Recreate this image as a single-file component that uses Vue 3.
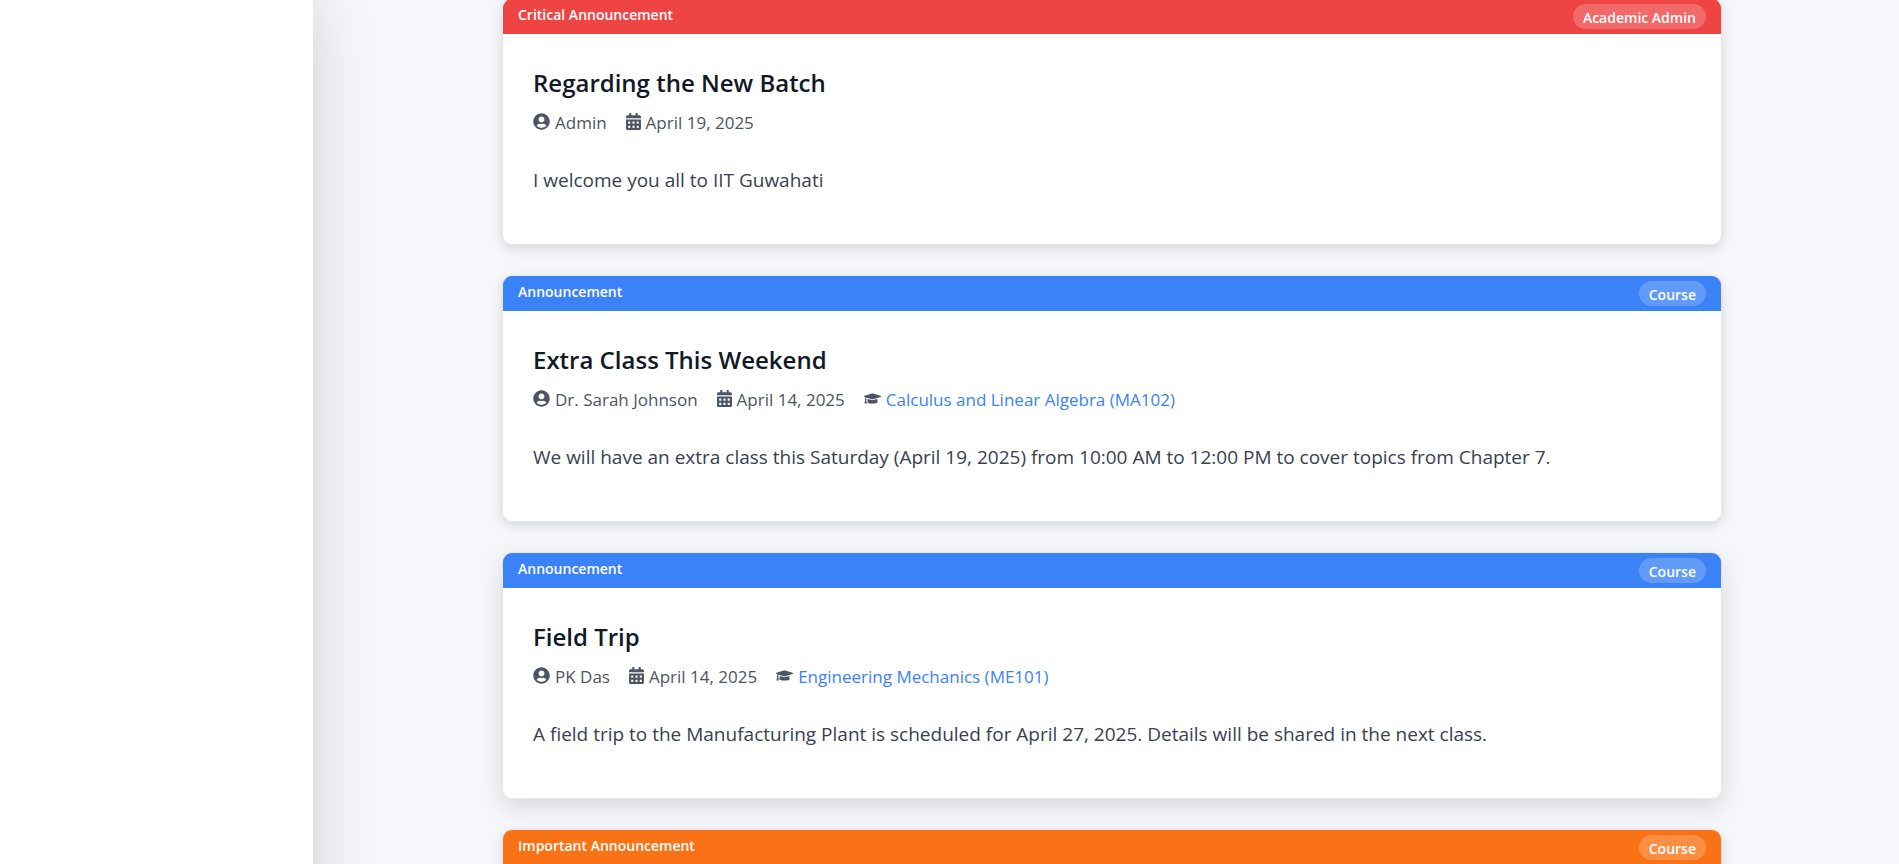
<script setup>
const announcements = [
  {
    id: 1,
    level: 'critical',
    label: 'Critical Announcement',
    source: 'Academic Admin',
    title: 'Regarding the New Batch',
    author: 'Admin',
    date: 'April 19, 2025',
    body: 'I welcome you all to IIT Guwahati',
  },
  {
    id: 2,
    level: 'normal',
    label: 'Announcement',
    source: 'Course',
    title: 'Extra Class This Weekend',
    author: 'Dr. Sarah Johnson',
    date: 'April 14, 2025',
    course: 'Calculus and Linear Algebra (MA102)',
    body: 'We will have an extra class this Saturday (April 19, 2025) from 10:00 AM to 12:00 PM to cover topics from Chapter 7.',
  },
  {
    id: 3,
    level: 'normal',
    label: 'Announcement',
    source: 'Course',
    title: 'Field Trip',
    author: 'PK Das',
    date: 'April 14, 2025',
    course: 'Engineering Mechanics (ME101)',
    body: 'A field trip to the Manufacturing Plant is scheduled for April 27, 2025. Details will be shared in the next class.',
    raised: true,
  },
  {
    id: 4,
    level: 'important',
    label: 'Important Announcement',
    source: 'Course',
  },
]
</script>

<template>
  <div class="layout">
    <aside class="sidebar"></aside>
    <main class="content">
      <article
        v-for="item in announcements"
        :key="item.id"
        class="card"
        :class="{ raised: item.raised }"
      >
        <header class="banner" :class="item.level">
          <span class="label">{{ item.label }}</span>
          <span class="badge">{{ item.source }}</span>
        </header>
        <div class="details">
          <template v-if="item.title">
            <h2 class="title">{{ item.title }}</h2>
            <div class="meta">
              <span class="meta-item">
                <svg class="icon" viewBox="0 0 496 512" aria-hidden="true">
                  <path d="M248 8C111 8 0 119 0 256s111 248 248 248 248-111 248-248S385 8 248 8zm0 96c48.600 0 88 39.400 88 88s-39.400 88-88 88-88-39.400-88-88 39.400-88 88-88zm0 344c-58.700 0-111.300-26.600-146.500-68.200 18.800-35.400 55.600-59.800 98.500-59.800 2.400 0 4.800.4 7.100 1.100 13 4.200 26.600 6.900 40.900 6.900 14.300 0 28-2.700 40.900-6.900 2.300-.7 4.700-1.100 7.100-1.100 42.900 0 79.700 24.400 98.500 59.800C359.300 421.400 306.700 448 248 448z" />
                </svg>
                {{ item.author }}
              </span>
              <span class="meta-item">
                <svg class="icon narrow" viewBox="0 0 448 512" aria-hidden="true">
                  <path d="M0 464c0 26.500 21.500 48 48 48h352c26.500 0 48-21.500 48-48V192H0v272zm320-196c0-6.600 5.400-12 12-12h40c6.600 0 12 5.400 12 12v40c0 6.600-5.400 12-12 12h-40c-6.600 0-12-5.400-12-12v-40zm0 128c0-6.600 5.400-12 12-12h40c6.600 0 12 5.400 12 12v40c0 6.600-5.400 12-12 12h-40c-6.600 0-12-5.400-12-12v-40zM192 268c0-6.600 5.400-12 12-12h40c6.600 0 12 5.400 12 12v40c0 6.600-5.400 12-12 12h-40c-6.600 0-12-5.400-12-12v-40zm0 128c0-6.600 5.400-12 12-12h40c6.600 0 12 5.400 12 12v40c0 6.600-5.400 12-12 12h-40c-6.600 0-12-5.400-12-12v-40zM64 268c0-6.600 5.400-12 12-12h40c6.600 0 12 5.400 12 12v40c0 6.600-5.400 12-12 12H76c-6.600 0-12-5.400-12-12v-40zm0 128c0-6.600 5.400-12 12-12h40c6.600 0 12 5.400 12 12v40c0 6.600-5.400 12-12 12H76c-6.600 0-12-5.400-12-12v-40zM400 64h-48V16c0-8.800-7.200-16-16-16h-32c-8.800 0-16 7.200-16 16v48H160V16c0-8.800-7.200-16-16-16h-32c-8.800 0-16 7.200-16 16v48H48C21.500 64 0 85.500 0 112v48h448v-48c0-26.500-21.500-48-48-48z" />
                </svg>
                {{ item.date }}
              </span>
              <span v-if="item.course" class="meta-item">
                <svg class="icon" viewBox="0 0 640 512" aria-hidden="true">
                  <path d="M622.340 153.200L343.400 67.500c-15.200-4.670-31.600-4.670-46.790 0L17.660 153.200c-23.540 7.230-23.540 38.360 0 45.590l48.630 14.940c-10.670 13.190-17.230 29.280-17.880 46.900C38.780 266.150 32 276.110 32 288c0 10.780 5.680 19.850 13.860 25.650L20.330 428.530C18.110 438.520 25.710 448 35.940 448h56.110c10.240 0 17.840-9.480 15.620-19.470L82.140 313.650C90.320 307.850 96 298.780 96 288c0-11.570-6.470-21.250-15.660-26.870.76-15.020 8.440-28.300 20.690-36.720L296.600 284.500c9.060 2.780 26.440 6.250 46.790 0l278.950-85.700c23.550-7.240 23.550-38.360 0-45.600zM352.790 315.090c-28.530 8.760-52.840 3.920-65.590 0l-145.020-44.550L128 384c0 35.350 85.960 64 192 64s192-28.650 192-64l-14.180-113.470-145.030 44.560z" />
                </svg>
                <a href="#" class="course">{{ item.course }}</a>
              </span>
            </div>
            <p class="body">{{ item.body }}</p>
          </template>
        </div>
      </article>
    </main>
  </div>
</template>

<style>
body {
  margin: 0;
  background: #f5f7fb;
}
</style>

<style scoped>
.layout {
  display: grid;
  grid-template-columns: 313px minmax(0, 1fr);
  height: 100vh;
  overflow: hidden;
  background: #f5f7fb;
  font-family: "Segoe UI", "Open Sans", "Noto Sans", sans-serif;
}

.sidebar {
  background: #fff;
  box-shadow: 0 0 60px rgba(0, 0, 0, 0.16);
}

.content {
  display: flex;
  flex-direction: column;
  gap: 30px;
  margin-top: -2px;
  padding: 0 177px 0 189px;
}

.card {
  box-sizing: border-box;
  flex: none;
  min-height: 247px;
  overflow: hidden;
  border: 1px solid #e5e7eb;
  border-radius: 10px;
  background: #fff;
  box-shadow: 0 4px 12px rgba(0, 0, 0, 0.13);
}

.card.raised {
  box-shadow: 0 8px 24px rgba(0, 0, 0, 0.13);
}

.banner {
  display: flex;
  justify-content: space-between;
  align-items: flex-start;
  box-sizing: border-box;
  height: 35px;
  padding: 5px 15px;
  color: #fff;
  font-size: 14px;
  font-weight: 600;
  line-height: 21px;
}

.critical {
  background: #ef4444;
}

.normal {
  background: #3b82f6;
}

.important {
  background: #f97316;
}

.badge {
  padding: 3px 10px 1px;
  border-radius: 20px;
  background: rgba(255, 255, 255, 0.2);
}

.details {
  padding: 30px;
}

.title {
  margin: 0;
  color: #111827;
  font-size: 24px;
  font-weight: 600;
  line-height: 38px;
}

.meta {
  display: flex;
  flex-wrap: wrap;
  gap: 19px;
  margin-top: 7px;
  color: #4b5563;
  font-size: 17px;
  line-height: 28px;
}

.meta-item {
  display: flex;
  align-items: center;
  gap: 5px;
}

.icon {
  width: 17px;
  height: 17px;
  margin-bottom: 4px;
  fill: currentColor;
}

.icon.narrow {
  width: 15px;
}

.course {
  color: #3b82f6;
  text-decoration: none;
}

.body {
  margin: 27px 0 0;
  color: #374151;
  font-size: 19px;
  line-height: 32px;
}
</style>
